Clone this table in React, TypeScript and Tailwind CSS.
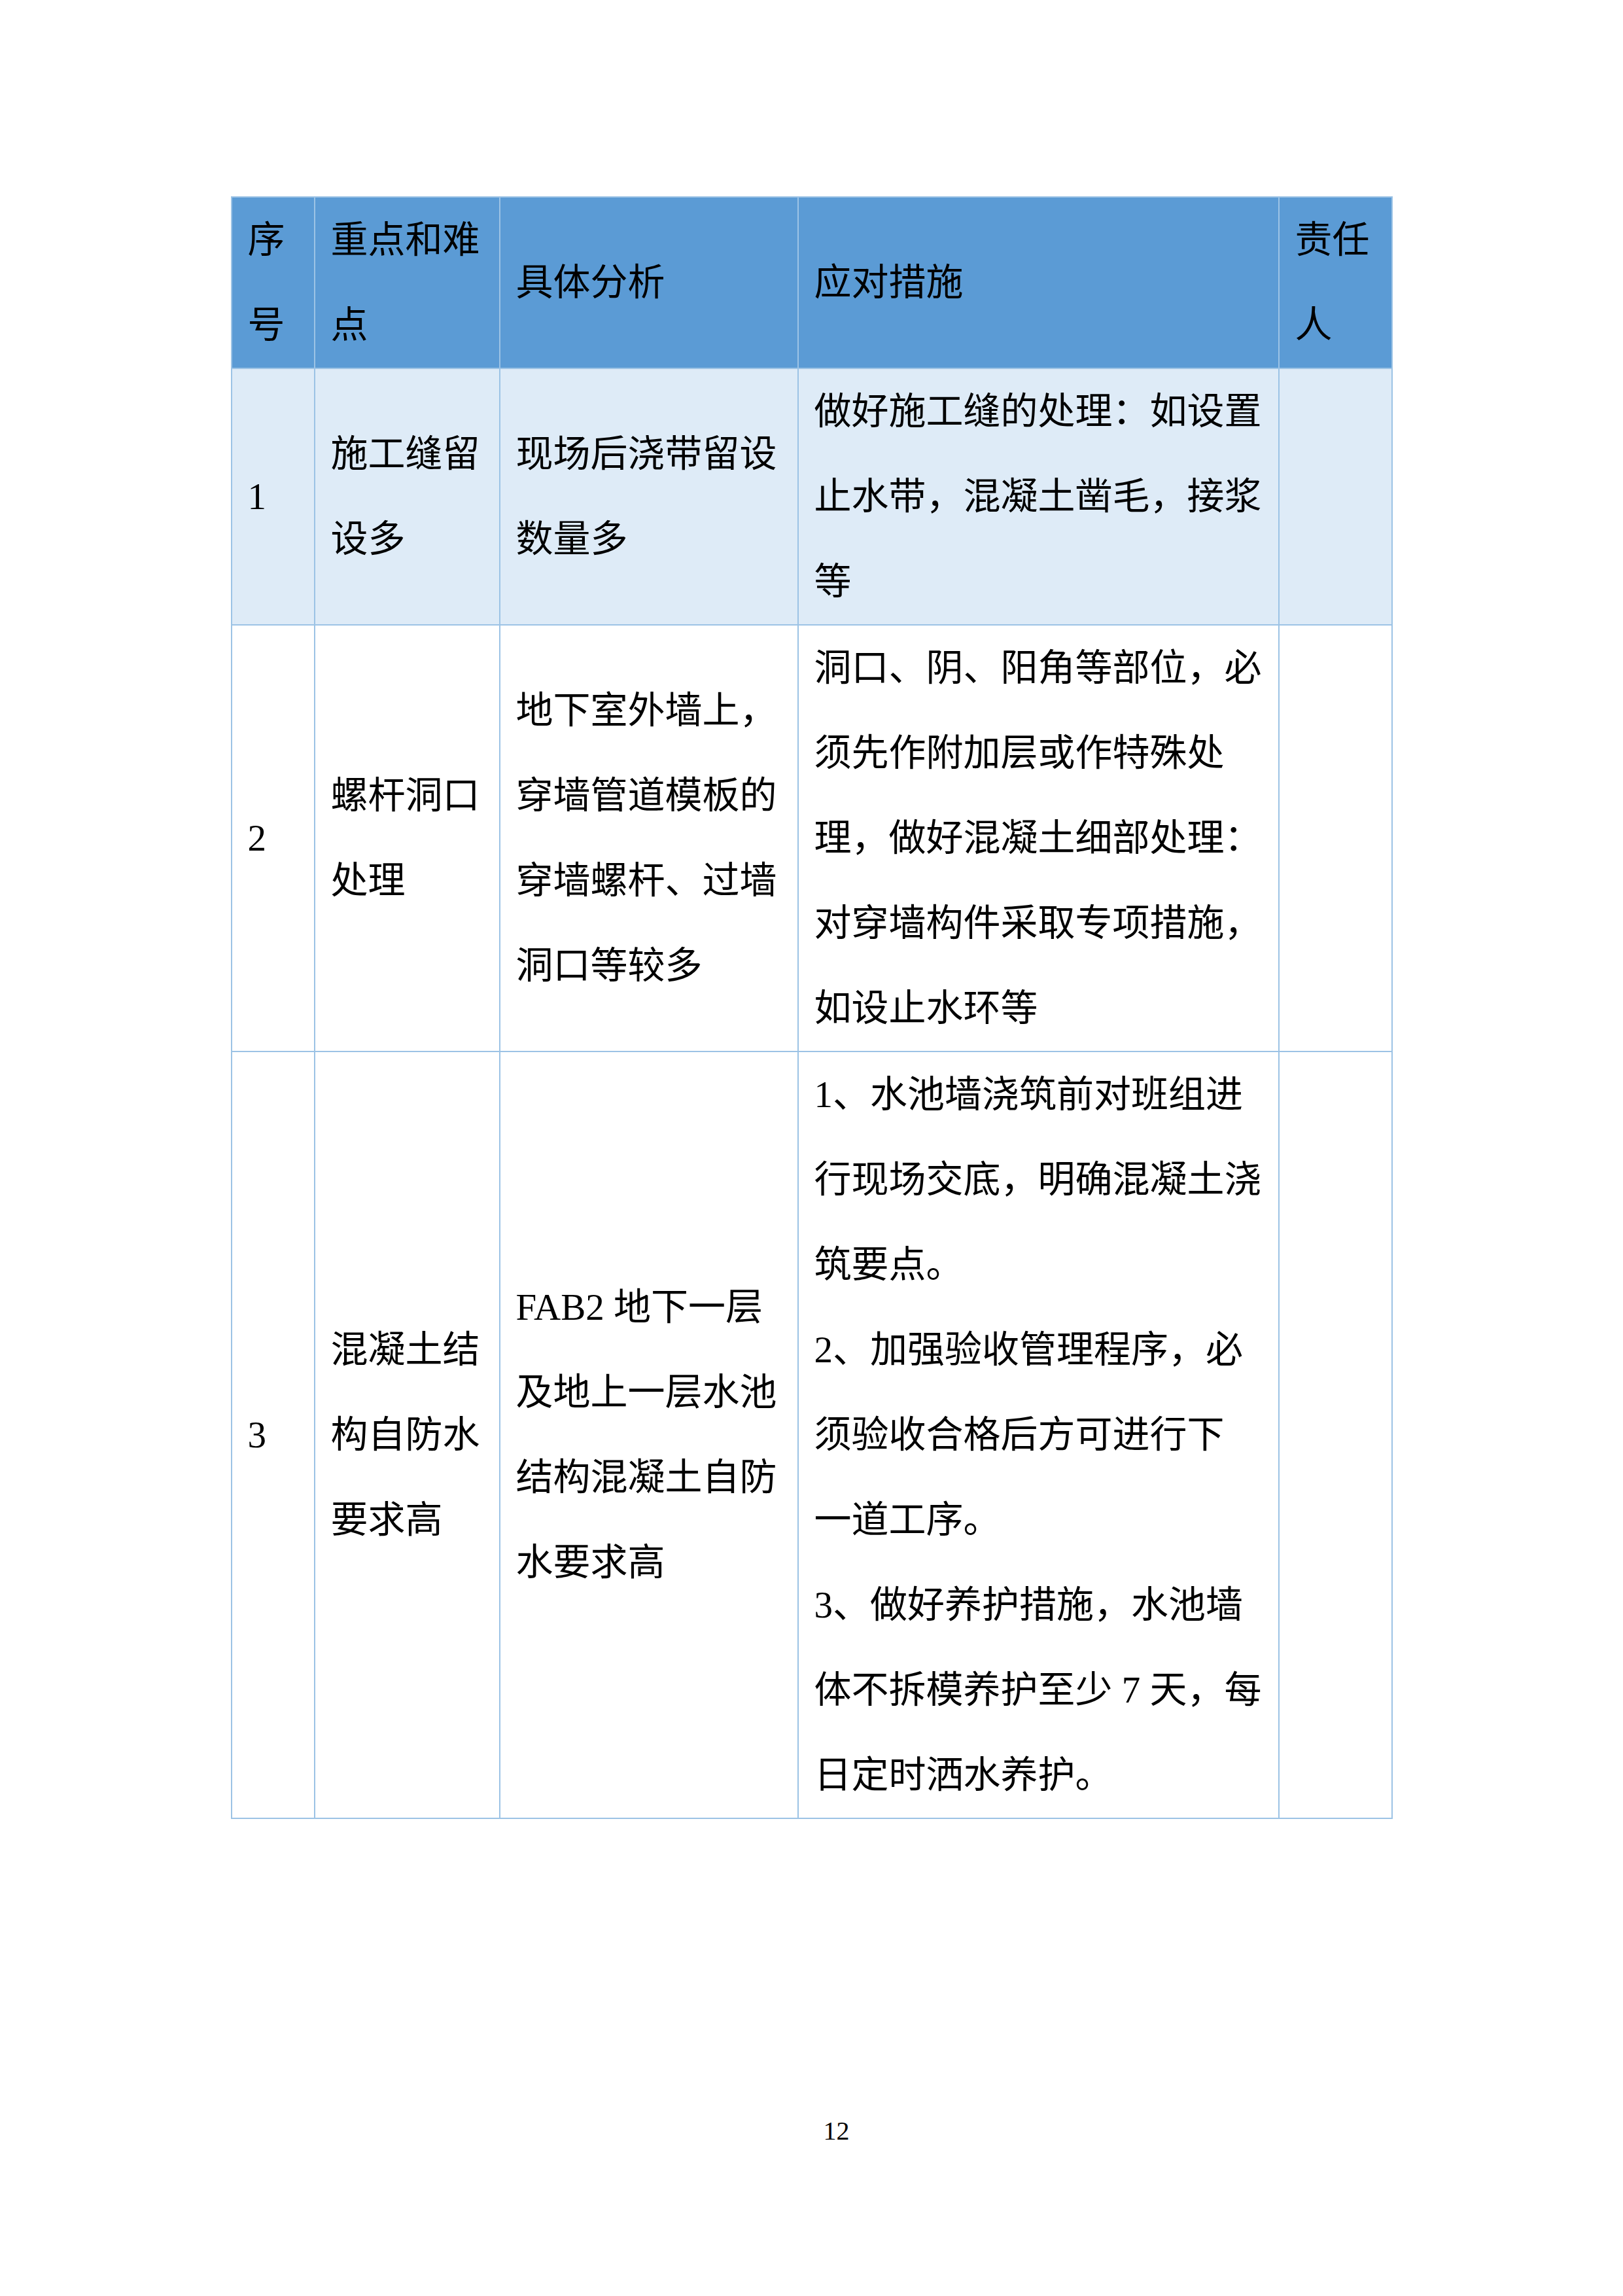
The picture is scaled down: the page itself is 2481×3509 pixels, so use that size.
import React from "react";

type Row = {
  no: string;
  point: string[];
  analysis: string[];
  measures: string[];
};

const rows: Row[] = [
  {
    no: "1",
    point: ["施工缝留", "设多"],
    analysis: ["现场后浇带留设", "数量多"],
    measures: ["做好施工缝的处理：如设置", "止水带，混凝土凿毛，接浆", "等"],
  },
  {
    no: "2",
    point: ["螺杆洞口", "处理"],
    analysis: ["地下室外墙上，", "穿墙管道模板的", "穿墙螺杆、过墙", "洞口等较多"],
    measures: [
      "洞口、阴、阳角等部位，必",
      "须先作附加层或作特殊处",
      "理，做好混凝土细部处理：",
      "对穿墙构件采取专项措施，",
      "如设止水环等",
    ],
  },
  {
    no: "3",
    point: ["混凝土结", "构自防水", "要求高"],
    analysis: ["FAB2 地下一层", "及地上一层水池", "结构混凝土自防", "水要求高"],
    measures: [
      "1、水池墙浇筑前对班组进",
      "行现场交底，明确混凝土浇",
      "筑要点。",
      "2、加强验收管理程序，必",
      "须验收合格后方可进行下",
      "一道工序。",
      "3、做好养护措施，水池墙",
      "体不拆模养护至少 7 天，每",
      "日定时洒水养护。",
    ],
  },
];

const Lines = ({ lines }: { lines: string[] }) => (
  <>
    {lines.map((l, i) => (
      <React.Fragment key={i}>
        {i > 0 && <br />}
        {l}
      </React.Fragment>
    ))}
  </>
);

const th = "border-2 border-[#9cc3e5] px-6 py-0 text-left align-middle font-normal";
const td = "border-2 border-[#9cc3e5] px-6 py-0 text-left align-middle";

export default function App() {
  return (
    <div className="min-h-[3509px] w-[2481px] bg-white pt-[300px] font-['Liberation_Serif','Noto_Sans_CJK_SC',serif] text-black">
      <table className="mx-auto w-[1774px] table-fixed border-collapse whitespace-nowrap text-[57px] leading-[130px]">
        <colgroup>
          <col className="w-[127px]" />
          <col className="w-[283px]" />
          <col className="w-[456px]" />
          <col className="w-[735px]" />
          <col className="w-[173px]" />
        </colgroup>
        <thead>
          <tr className="bg-[#5b9bd5]">
            <th className={th}>
              <Lines lines={["序", "号"]} />
            </th>
            <th className={th}>
              <Lines lines={["重点和难", "点"]} />
            </th>
            <th className={th}>具体分析</th>
            <th className={th}>应对措施</th>
            <th className={th}>
              <Lines lines={["责任", "人"]} />
            </th>
          </tr>
        </thead>
        <tbody>
          {rows.map((r, i) => (
            <tr key={r.no} className={i === 0 ? "bg-[#deebf7]" : "bg-white"}>
              <td className={td}>{r.no}</td>
              <td className={td}>
                <Lines lines={r.point} />
              </td>
              <td className={td}>
                <Lines lines={r.analysis} />
              </td>
              <td className={td}>
                <Lines lines={r.measures} />
              </td>
              <td className={td}></td>
            </tr>
          ))}
        </tbody>
      </table>
      <div className="mt-[457px] w-full pl-[76px] text-center text-[40px] leading-none">12</div>
    </div>
  );
}
